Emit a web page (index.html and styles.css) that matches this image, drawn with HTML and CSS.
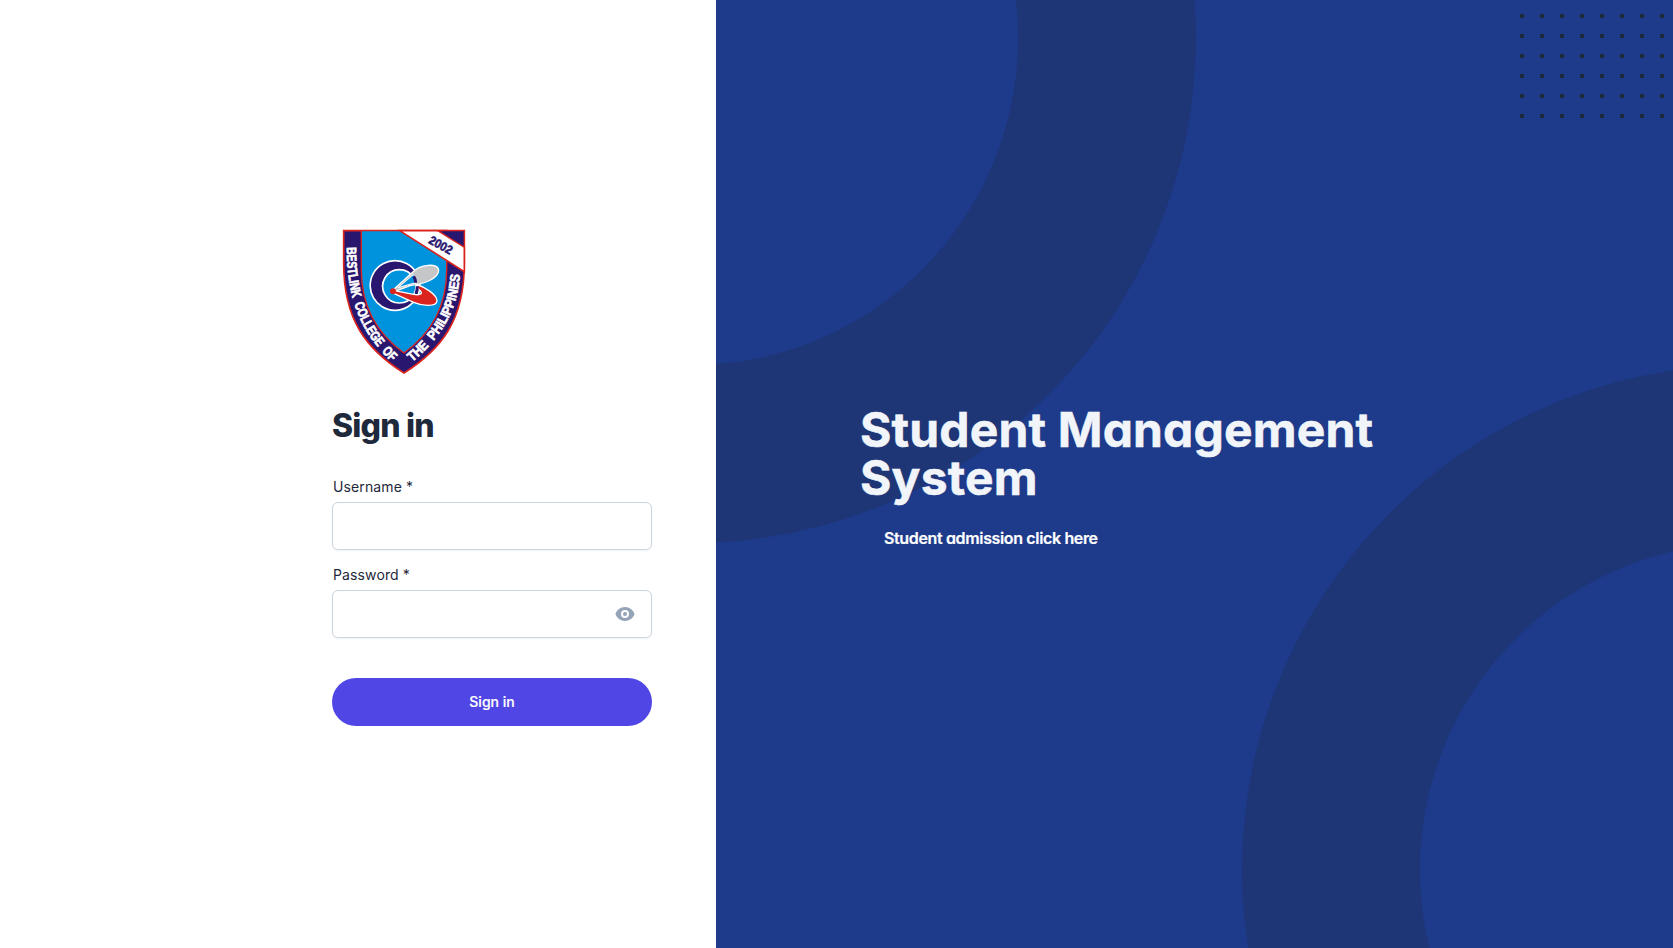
FILE: index.html
```html
<!DOCTYPE html>
<html lang="en">
<head>
<meta charset="utf-8">
<title>Sign in</title>
<link rel="stylesheet" href="styles.css">
</head>
<body>
<div class="page">
  <main class="login">
    <div class="login-column">
      <svg class="crest" viewBox="6 0 450 480" role="img" aria-label="Bestlink College of the Philippines">
        <defs>
          <path id="crest-left" d="M50 82 C50 225 84 332 190 431"/>
          <path id="crest-right" d="M247 426 C335 350 388 270 390 148"/>
        </defs>
        <path class="crest-shield" d="M41 32 H403 V130 C403 300 335 388 222 459 C109 388 41 300 41 130 Z"/>
        <path class="crest-field" d="M94 32 H350 V150 C350 255 305 340 222 399 C139 340 94 255 94 150 Z"/>
        <path class="crest-band" d="M209 32 H352 L403 80 V155 Z"/>
        <path class="crest-corner" d="M323 32 H403 V82 Z"/>
        <text class="crest-year" transform="translate(293 68) rotate(29)" textLength="76" lengthAdjust="spacingAndGlyphs">2002</text>
        <path class="crest-ring" fill-rule="evenodd" d="M195 122 a74.500 74.500 0 1 0 .1 0 Z M208 149 a50 50 0 1 1 -.1 0 Z"/>
        <path class="crest-grey" d="M190 209 L246 158 C270 133 325 127 326 151 C326 176 282 192 240 197 L196 214 Z"/>
        <path class="crest-gap" d="M204 203 L250 164 C258 172 259 180 257 188 L232 195 Z"/>
        <path class="crest-navy-arc" d="M251 169 Q257 178 257 188"/>
        <path class="crest-red" d="M190 211 L250 223 C274 227 282 220 266 208 L257 192 C284 201 321 223 321 243 C320 261 276 258 251 247 L189 219 Z"/>
        <path class="crest-navy-arc" d="M262 199 Q262 211 258 221"/>
        <circle class="crest-dot" cx="189" cy="214" r="9"/>
        <text class="crest-name" textLength="381" lengthAdjust="spacingAndGlyphs"><textPath href="#crest-left" textLength="381" lengthAdjust="spacingAndGlyphs">BESTLINK&#160; COLLEGE&#160; OF</textPath></text>
        <text class="crest-name" textLength="308" lengthAdjust="spacingAndGlyphs"><textPath href="#crest-right" textLength="308" lengthAdjust="spacingAndGlyphs">THE&#160; PHILIPPINES</textPath></text>
      </svg>
      <h1 class="login-title">Sign in</h1>
      <form class="form">
        <div class="field">
          <label class="field-label" for="username">Username *</label>
          <input class="field-input" id="username" type="text">
        </div>
        <div class="field">
          <label class="field-label" for="password">Password *</label>
          <div class="field-box">
            <input class="field-plain" id="password" type="password">
            <svg class="eye" viewBox="0 0 20 20" aria-hidden="true">
              <path d="M10 12a2 2 0 1 0 0-4 2 2 0 0 0 0 4z"/>
              <path fill-rule="evenodd" d="M.458 10C1.732 5.943 5.522 3 10 3s8.268 2.943 9.542 7c-1.274 4.057-5.064 7-9.542 7S1.732 14.057.458 10zM14 10a4 4 0 1 1-8 0 4 4 0 0 1 8 0z"/>
            </svg>
          </div>
        </div>
        <button class="submit" type="button">Sign in</button>
      </form>
    </div>
  </main>
  <section class="hero">
    <svg class="hero-art" viewBox="0 0 957 948" aria-hidden="true">
      <defs>
        <pattern id="dots" x="804" y="14" width="20" height="20" patternUnits="userSpaceOnUse">
          <rect class="hero-square" width="4" height="4"/>
        </pattern>
      </defs>
      <circle class="hero-ring" cx="-25" cy="38.1" r="416"/>
      <circle class="hero-ring" cx="1031" cy="870" r="416"/>
      <rect x="804" y="14" width="153" height="106" fill="url(#dots)"/>
    </svg>
    <div class="hero-copy">
      <h2 class="hero-title">Student Management System</h2>
      <a class="hero-link">Student admission click here</a>
    </div>
  </section>
</div>
</body>
</html>
```
FILE: styles.css
```css
* { box-sizing: border-box; }
body {
  margin: 0;
  font-family: Inter, "Liberation Sans", sans-serif;
  color: #1e293b;
  background: #fff;
}
.page { display: flex; height: 948px; overflow: hidden; }
.login {
  display: flex;
  justify-content: flex-end;
  width: 716px;
  padding: 220px 64px 0 0;
}
.login-column { width: 320px; }
.crest { display: block; width: 150px; height: 160px; }
.crest-shield { fill: #29166f; stroke: #dc241f; stroke-width: 5; }
.crest-field { fill: #0093dd; stroke: #dc241f; stroke-width: 4; }
.crest-band { fill: #fff; stroke: #dc241f; stroke-width: 5; }
.crest-corner { fill: #29166f; stroke: #dc241f; stroke-width: 4; }
.crest-year { fill: #29166f; font: bold 37px "Liberation Sans", sans-serif; stroke: #29166f; stroke-width: 1.5; }
.crest-name {
  fill: #fff;
  stroke: #fff;
  stroke-width: 2;
  font: bold 41px "Liberation Sans Narrow", "Liberation Sans", sans-serif;
}
.crest-ring { fill: #29166f; stroke: #fff; stroke-width: 5; }
.crest-grey { fill: #c5c6c8; stroke: #fff; stroke-width: 4; }
.crest-gap { fill: #0093dd; stroke: #fff; stroke-width: 3; }
.crest-navy-arc { fill: none; stroke: #29166f; stroke-width: 9; }
.crest-red { fill: #dc241f; stroke: #fff; stroke-width: 4; }
.crest-dot { fill: #dc241f; }
.login-title {
  margin: 23px 0 29px;
  font-size: 32px;
  line-height: 45px;
  font-weight: 800;
  letter-spacing: -0.8px;
}
.form { display: flex; flex-direction: column; gap: 15px; }
.field { display: flex; flex-direction: column; gap: 5px; }
.field-label { padding-left: 1px; font-size: 14px; line-height: 20px; font-weight: 400; letter-spacing: 0.12px; }
.field-input, .field-box {
  width: 100%;
  height: 48px;
  padding: 0 16px;
  background: #fff;
  border: 1px solid #cbd5e1;
  border-radius: 6px;
  box-shadow: 0 1px 2px rgba(0, 0, 0, .05);
}
.field-box { display: flex; align-items: center; }
.field-plain { flex: 1; min-width: 0; border: 0; outline: 0; background: none; }
.eye { width: 20px; height: 20px; fill: #94a3b8; }
.submit {
  height: 48px;
  margin-top: 25px;
  padding: 0 0 2px;
  border: 0;
  border-radius: 24px;
  background: #4f46e5;
  color: #fff;
  font: 500 14px Inter, sans-serif;
  -webkit-text-stroke: 0.2px #fff;
}
.hero {
  position: relative;
  display: flex;
  width: 957px;
  padding: 406px 144px 0;
  background: #1e3a8a;
  overflow: hidden;
}
.hero-art { position: absolute; inset: 0; width: 957px; height: 948px; }
.hero-ring { fill: none; stroke: #1e293b; stroke-width: 177.8; opacity: .25; }
.hero-square { fill: #1e293b; }
.hero-copy { position: relative; width: 640px; font-feature-settings: "cv11"; }
.hero-title {
  margin: 0;
  color: #f1f5f9;
  font-size: 48px;
  line-height: 48px;
  font-weight: 700;
  letter-spacing: 0.15px;
  -webkit-text-stroke: 0.5px #f1f5f9;
}
.hero-link {
  display: block;
  margin: 24px 0 0 24px;
  color: #fff;
  font-size: 16px;
  line-height: 24px;
  font-weight: 600;
  letter-spacing: -0.35px;
  -webkit-text-stroke: 0.2px #fff;
}
```
